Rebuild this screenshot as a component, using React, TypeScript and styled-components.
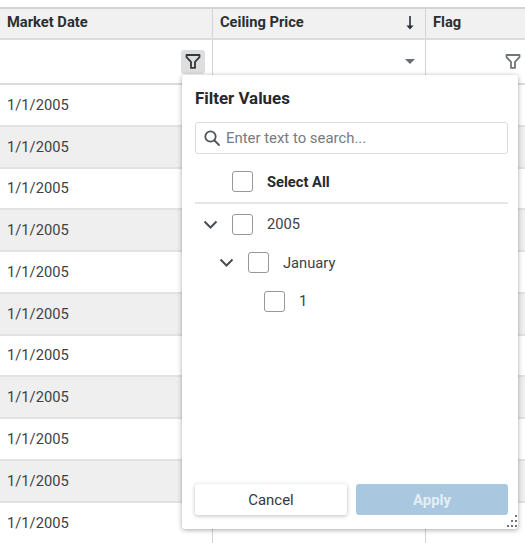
import { createGlobalStyle, styled } from 'styled-components';

const GlobalStyle = createGlobalStyle`
  html, body {
    margin: 0;
    padding: 0;
    background: #fff;
    overflow: hidden;
  }
  body {
    font-family: Roboto, "Liberation Sans", sans-serif;
    color: #212529;
  }
`;

const COLUMNS = '213px 213px 99px';
const DATE_ROWS = 11;

const Page = styled.div`
  position: relative;
  width: 525px;
  height: 543px;
  overflow: hidden;
  padding-top: 7px;
  box-sizing: border-box;
`;

const HeaderRow = styled.div`
  display: grid;
  grid-template-columns: ${COLUMNS};
  height: 33px;
  box-sizing: border-box;
  background: #f1f1f1;
  border-top: 2px solid #d4d4d4;
  border-bottom: 2px solid #dcdcdc;
`;

const HeaderCell = styled.div`
  display: flex;
  align-items: center;
  justify-content: space-between;
  padding: 0 10px 3px 7px;
  font-size: 14.7px;
  font-weight: 700;
  color: #2b2f33;
  border-right: 1px solid #d4d4d4;
  &:last-child {
    border-right: none;
  }
`;

const FilterRow = styled.div`
  display: grid;
  grid-template-columns: ${COLUMNS};
  height: 45px;
  box-sizing: border-box;
  border-bottom: 2px solid #dcdcdc;
`;

const FilterCell = styled.div`
  display: flex;
  align-items: center;
  justify-content: flex-end;
  padding: 0 7px 0 0;
  border-right: 1px solid #d4d4d4;
  &:last-child {
    border-right: none;
    padding-right: 0;
  }
`;

const FilterButton = styled.div<{ $active?: boolean }>`
  display: flex;
  align-items: center;
  justify-content: center;
  width: 24px;
  height: 24px;
  border-radius: 3px;
  background: ${({ $active }) => ($active ? '#dedede' : 'transparent')};
  color: ${({ $active }) => ($active ? '#33383c' : '#70757a')};
`;

const Caret = styled.span`
  width: 0;
  height: 0;
  margin-right: 3px;
  border-left: 5px solid transparent;
  border-right: 5px solid transparent;
  border-top: 5px solid #686d71;
`;

const RowList = styled.div`
  display: flex;
  flex-direction: column;
  & > div:last-child {
    border-bottom: none;
  }
`;

const DataRow = styled.div<{ $shaded: boolean }>`
  display: grid;
  grid-template-columns: ${COLUMNS};
  flex: none;
  height: 41.75px;
  box-sizing: border-box;
  background: ${({ $shaded }) => ($shaded ? '#efefef' : '#fff')};
  border-bottom: 2px solid #e2e2e2;
`;

const DataCell = styled.div`
  display: flex;
  align-items: center;
  padding-left: 7px;
  font-size: 14.7px;
  color: #3c4146;
  border-right: 1px solid #d4d4d4;
  &:last-child {
    border-right: none;
  }
`;

const Popup = styled.div`
  position: absolute;
  left: 182px;
  top: 75px;
  width: 336px;
  height: 454px;
  box-sizing: border-box;
  display: flex;
  flex-direction: column;
  padding: 12px 10px 14px 13px;
  background: #fff;
  border-radius: 3px;
  box-shadow: 0 1px 5px rgba(0, 0, 0, 0.35);
`;

const Title = styled.div`
  font-size: 16.9px;
  font-weight: 700;
  line-height: 22px;
  color: #25292d;
`;

const SearchBox = styled.div`
  display: flex;
  align-items: center;
  gap: 5px;
  height: 32px;
  margin-top: 13px;
  padding-left: 7px;
  box-sizing: border-box;
  border: 1px solid #dcdcdc;
  border-radius: 3px;
  font-size: 14.9px;
  color: #777b7f;
`;

const SelectAllRow = styled.div`
  display: flex;
  align-items: center;
  height: 43px;
  margin-top: 7px;
  padding-left: 37px;
  border-bottom: 2px solid #e6e6e6;
  box-sizing: border-box;
`;

const TreeList = styled.div`
  flex: 1;
  display: flex;
  flex-direction: column;
  padding-top: 1px;
`;

const TreeRow = styled.div<{ $depth: number }>`
  display: flex;
  align-items: center;
  height: 38.5px;
  padding-left: ${({ $depth }) => 8 + $depth * 16}px;
`;

const Chevron = styled.svg`
  width: 15px;
  height: 15px;
  margin-right: 14px;
  flex: none;
  color: #4a4f54;
`;

const CheckBox = styled.span<{ $leaf?: boolean }>`
  display: block;
  flex: none;
  width: 21px;
  height: 21px;
  box-sizing: border-box;
  margin-left: ${({ $leaf }) => ($leaf ? '29px' : '0')};
  border: 1.5px solid #94989c;
  border-radius: 3px;
  background: #fff;
`;

const ItemLabel = styled.span<{ $bold?: boolean }>`
  margin-left: 14px;
  font-size: 14.7px;
  font-weight: ${({ $bold }) => ($bold ? 700 : 400)};
  color: ${({ $bold }) => ($bold ? '#25292d' : '#3c4146')};
`;

const Footer = styled.div`
  display: flex;
  gap: 9px;
`;

const CancelButton = styled.button`
  flex: 1;
  height: 31px;
  padding: 0;
  border: none;
  border-radius: 3px;
  background: #fff;
  box-shadow: 0 1px 4px rgba(0, 0, 0, 0.25);
  font: 400 14.9px Roboto, sans-serif;
  color: #33383c;
`;

const ApplyButton = styled.button`
  flex: 1;
  height: 31px;
  padding: 0;
  border: none;
  border-radius: 3px;
  background: #a9c8e0;
  font: 700 14.9px Roboto, sans-serif;
  color: #e4eef5;
`;

const ResizeGrip = styled.svg`
  position: absolute;
  right: 0;
  bottom: 0;
  width: 15px;
  height: 15px;
  color: #6f7478;
`;

const FunnelIcon = () => (
  <svg width="16" height="17" viewBox="0 0 16 16" fill="none" stroke="currentColor" strokeWidth="1.8" strokeLinejoin="round">
    <path d="M1.5 1.5h13v2.2L10 8.4v6H6V8.4L1.5 3.7z" />
  </svg>
);

const SortIcon = () => (
  <svg width="10" height="15" viewBox="0 0 10 15" fill="#2b2f33">
    <path d="M4.2 1h1.6v9.5H8.6L5 14.5 1.4 10.5h2.8z" />
  </svg>
);

const SearchIcon = () => (
  <svg width="18" height="18" viewBox="0 0 18 18" fill="none" stroke="#50555a" strokeWidth="1.8" strokeLinecap="round">
    <circle cx="7.5" cy="7.5" r="5.2" />
    <path d="M11.5 11.5l4.5 4.5" />
  </svg>
);

const ChevronDown = () => (
  <Chevron viewBox="0 0 15 15" fill="none" stroke="currentColor" strokeWidth="2">
    <path d="M1.5 4.5l6 6 6-6" />
  </Chevron>
);

export default function App() {
  return (
    <>
      <GlobalStyle />
      <Page>
        <HeaderRow>
          <HeaderCell>Market Date</HeaderCell>
          <HeaderCell>
            Ceiling Price
            <SortIcon />
          </HeaderCell>
          <HeaderCell>Flag</HeaderCell>
        </HeaderRow>
        <FilterRow>
          <FilterCell>
            <FilterButton $active>
              <FunnelIcon />
            </FilterButton>
          </FilterCell>
          <FilterCell>
            <Caret />
          </FilterCell>
          <FilterCell>
            <FilterButton>
              <FunnelIcon />
            </FilterButton>
          </FilterCell>
        </FilterRow>
        <RowList>
          {Array.from({ length: DATE_ROWS }, (_, i) => (
            <DataRow key={i} $shaded={i % 2 === 1}>
              <DataCell>1/1/2005</DataCell>
              <DataCell />
              <DataCell />
            </DataRow>
          ))}
        </RowList>
        <Popup>
          <Title>Filter Values</Title>
          <SearchBox>
            <SearchIcon />
            Enter text to search...
          </SearchBox>
          <SelectAllRow>
            <CheckBox />
            <ItemLabel $bold>Select All</ItemLabel>
          </SelectAllRow>
          <TreeList>
            <TreeRow $depth={0}>
              <ChevronDown />
              <CheckBox />
              <ItemLabel>2005</ItemLabel>
            </TreeRow>
            <TreeRow $depth={1}>
              <ChevronDown />
              <CheckBox />
              <ItemLabel>January</ItemLabel>
            </TreeRow>
            <TreeRow $depth={2}>
              <CheckBox $leaf />
              <ItemLabel>1</ItemLabel>
            </TreeRow>
          </TreeList>
          <Footer>
            <CancelButton>Cancel</CancelButton>
            <ApplyButton>Apply</ApplyButton>
          </Footer>
          <ResizeGrip viewBox="0 0 15 15" fill="currentColor">
            <rect x="12" y="1" width="2" height="2" />
            <rect x="8" y="6" width="2" height="2" />
            <rect x="12" y="6" width="2" height="2" />
            <rect x="4" y="11" width="2" height="2" />
            <rect x="8" y="11" width="2" height="2" />
            <rect x="12" y="11" width="2" height="2" />
          </ResizeGrip>
        </Popup>
      </Page>
    </>
  );
}
